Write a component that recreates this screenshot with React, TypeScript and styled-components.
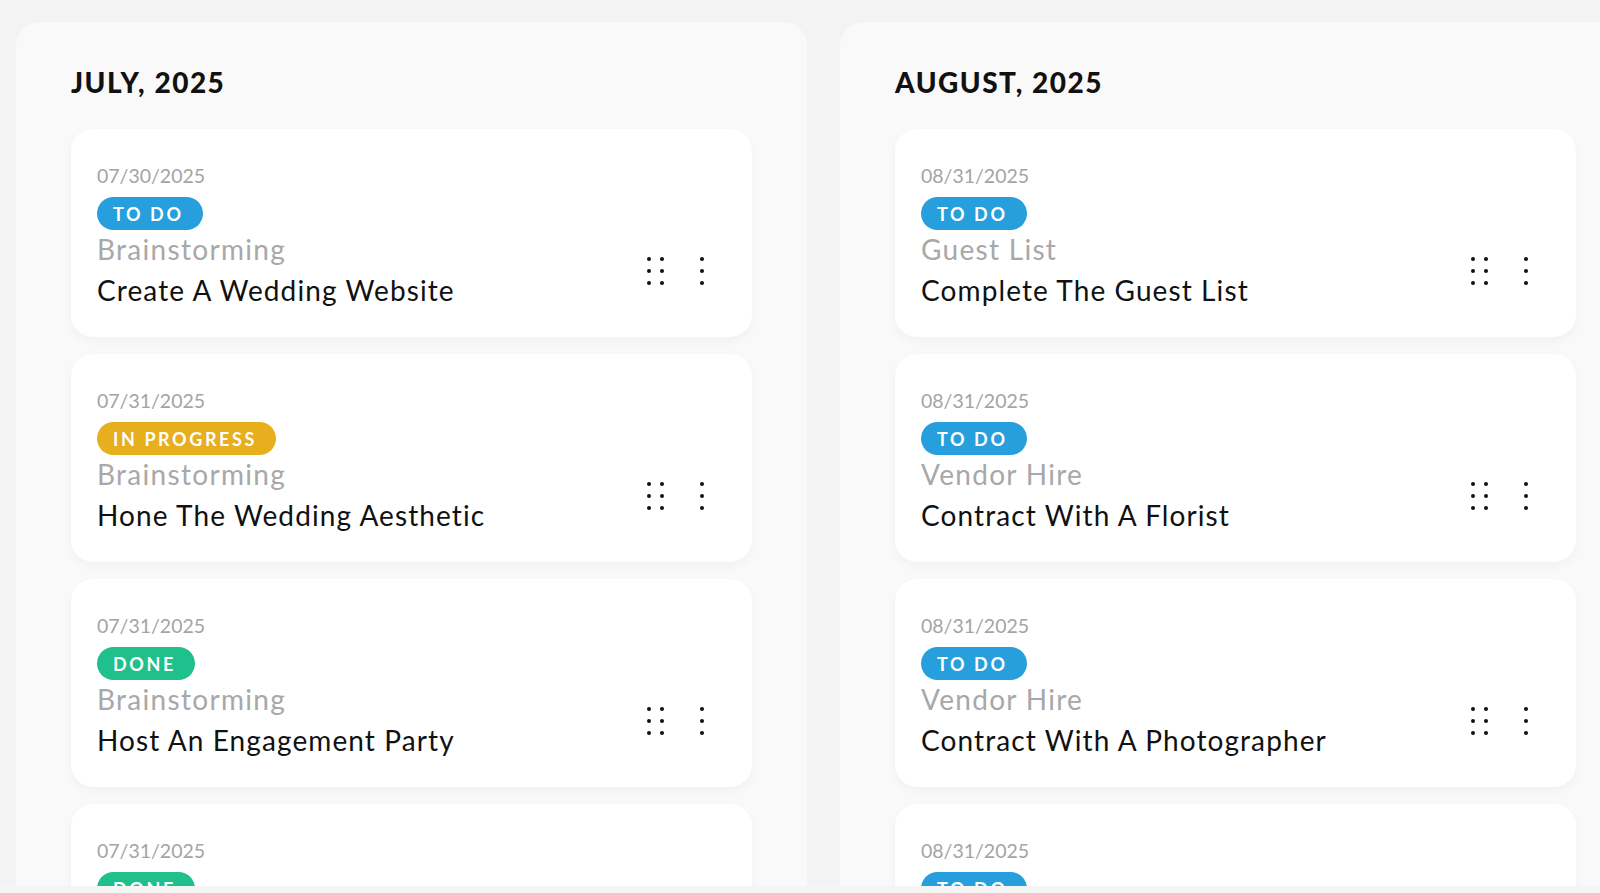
import styled, { createGlobalStyle } from 'styled-components'

type Status = 'todo' | 'progress' | 'done'

interface Task {
    date: string
    status: Status
    category: string
    title: string
}

interface Month {
    name: string
    tasks: Task[]
}

const months: Month[] = [
    {
        name: 'JULY, 2025',
        tasks: [
            { date: '07/30/2025', status: 'todo', category: 'Brainstorming', title: 'Create A Wedding Website' },
            { date: '07/31/2025', status: 'progress', category: 'Brainstorming', title: 'Hone The Wedding Aesthetic' },
            { date: '07/31/2025', status: 'done', category: 'Brainstorming', title: 'Host An Engagement Party' },
            { date: '07/31/2025', status: 'done', category: 'Brainstorming', title: 'Choose Your Wedding Party' },
        ],
    },
    {
        name: 'AUGUST, 2025',
        tasks: [
            { date: '08/31/2025', status: 'todo', category: 'Guest List', title: 'Complete The Guest List' },
            { date: '08/31/2025', status: 'todo', category: 'Vendor Hire', title: 'Contract With A Florist' },
            { date: '08/31/2025', status: 'todo', category: 'Vendor Hire', title: 'Contract With A Photographer' },
            { date: '08/31/2025', status: 'todo', category: 'Vendor Hire', title: 'Contract With A Caterer' },
        ],
    },
]

const statusLabel: Record<Status, string> = {
    todo: 'TO DO',
    progress: 'IN PROGRESS',
    done: 'DONE',
}

const statusColor: Record<Status, string> = {
    todo: '#279fdd',
    progress: '#e7ae1d',
    done: '#1fc08b',
}

function GripIcon() {
    return (
        <svg width="17" height="28" viewBox="0 0 17 28">
            {[2, 14, 26].map(cy => (
                <g key={cy}>
                    <circle cx="2" cy={cy} r="2" fill="#111" />
                    <circle cx="15" cy={cy} r="2" fill="#111" />
                </g>
            ))}
        </svg>
    )
}

function KebabIcon() {
    return (
        <svg width="4" height="28" viewBox="0 0 4 28">
            {[2, 14, 26].map(cy => (
                <circle key={cy} cx="2" cy={cy} r="2" fill="#111" />
            ))}
        </svg>
    )
}

function TaskCard({ task }: { task: Task }) {
    return (
        <Card>
            <DateText>{ task.date }</DateText>
            <Badge $status={ task.status }>{ statusLabel[task.status] }</Badge>
            <Row>
                <TextBlock>
                    <Category>{ task.category }</Category>
                    <Title>{ task.title }</Title>
                </TextBlock>
                <Actions>
                    <IconButton aria-label="Drag"><GripIcon /></IconButton>
                    <IconButton aria-label="More"><KebabIcon /></IconButton>
                </Actions>
            </Row>
        </Card>
    )
}

function App() {
    return (
        <>
            <GlobalStyle />
            <Board>
                { months.map(month => (
                    <Column key={ month.name }>
                        <Heading>{ month.name }</Heading>
                        <CardList>
                            { month.tasks.map((task, i) => (
                                <TaskCard key={ i } task={ task } />
                            )) }
                        </CardList>
                    </Column>
                )) }
            </Board>
        </>
    )
}

const GlobalStyle = createGlobalStyle`
  * {
    box-sizing: border-box;
  }

  body {
    margin: 0;
    background-color: #f5f5f5;
    font-family: Lato, "Open Sans", sans-serif;
    overflow: hidden;
  }
`

const Board = styled.main`
  display: flex;
  gap: 33px;
  height: 886px;
  padding: 22px 0 0 16px;
  overflow: hidden;
  background-color: #f3f3f3;
`

const Column = styled.section`
  flex: 0 0 791px;
  padding: 44px 55px 0;
  border-radius: 24px 24px 0 0;
  background-color: #f9f9f9;
  overflow: hidden;
`

const Heading = styled.h2`
  margin: 0 0 31px;
  font-size: 28px;
  line-height: 32px;
  font-weight: 900;
  letter-spacing: 1.5px;
  color: #111;
`

const CardList = styled.div`
  display: flex;
  flex-direction: column;
  gap: 17px;
`

const Card = styled.article`
  height: 208px;
  flex-shrink: 0;
  padding: 35px 48px 0 26px;
  border-radius: 22px;
  background-color: #fff;
  box-shadow: 0 4px 10px rgba(0, 0, 0, 0.035);
  display: flex;
  flex-direction: column;
  align-items: flex-start;
`

const DateText = styled.div`
  font-size: 19.5px;
  line-height: 24px;
  color: #a4a4a4;
`

const Badge = styled.span<{ $status: Status }>`
  margin-top: 9px;
  height: 33px;
  padding: 0 19px 0 16px;
  border-radius: 17px;
  display: inline-flex;
  align-items: center;
  background-color: ${ p => statusColor[p.$status] };
  color: #fff;
  font-size: 18px;
  font-weight: 700;
  letter-spacing: 2.6px;
`

const Row = styled.div`
  align-self: stretch;
  margin-top: 1px;
  display: flex;
  align-items: center;
  justify-content: space-between;
`

const TextBlock = styled.div`
  display: flex;
  flex-direction: column;
`

const Category = styled.div`
  font-size: 28px;
  line-height: 37px;
  letter-spacing: 1.3px;
  color: #a8a8a8;
`

const Title = styled.div`
  margin-top: 4px;
  font-size: 28px;
  line-height: 37px;
  letter-spacing: 1.1px;
  color: #111;
`

const Actions = styled.div`
  display: flex;
  align-items: center;
  gap: 36px;
  padding-top: 2px;
`

const IconButton = styled.button`
  padding: 0;
  border: none;
  background: none;
  display: flex;
  cursor: pointer;
`

export default App
